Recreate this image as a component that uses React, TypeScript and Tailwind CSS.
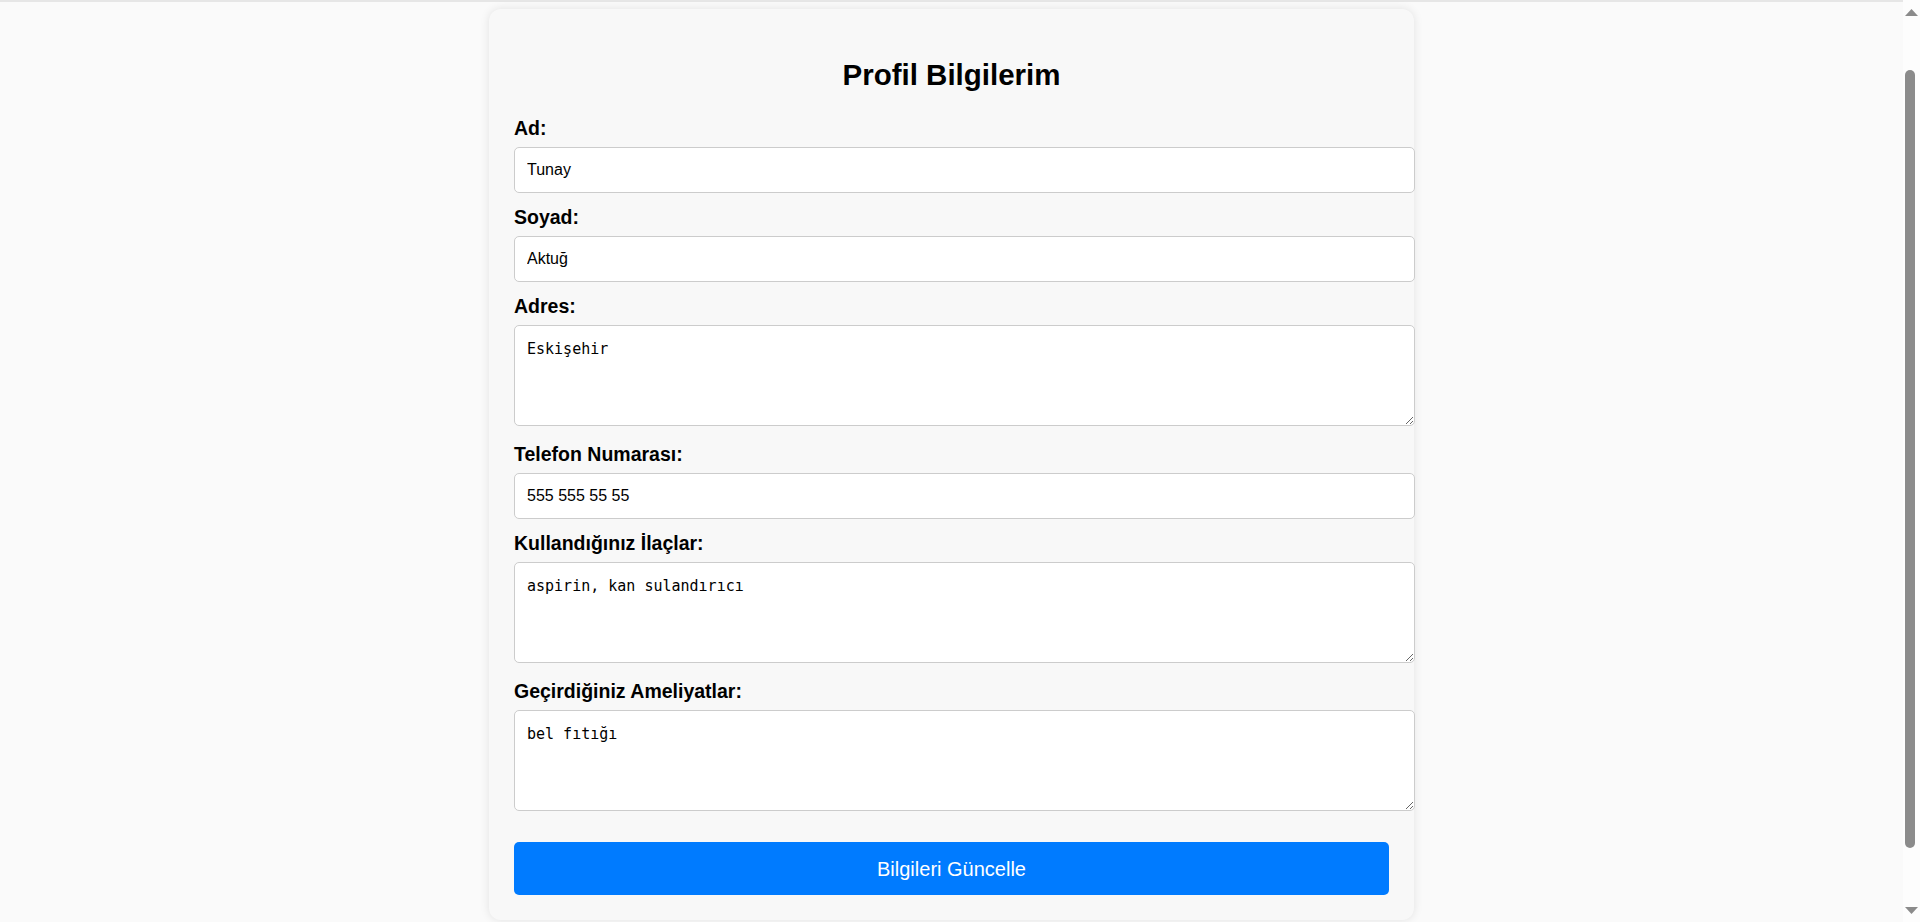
import React, { useLayoutEffect, useState } from 'react'

const inputClass =
  'block h-[46px] w-[901px] px-3 mb-[13px] bg-white border border-[#cccccc] rounded-[5px] text-[16px] text-black outline-none'
const areaClass =
  'block h-[101px] w-[901px] p-3 mb-[17px] bg-white border border-[#cccccc] rounded-[5px] text-[15px] text-black outline-none resize font-["DejaVu_Sans_Mono",monospace]'
const labelClass = 'block mb-2 text-[19.5px] leading-[22px] font-bold text-black'

// classic browser scrollbar, drawn since the headless window hides its own
const ScrollBar = () => (
  <div className='fixed top-0 right-0 h-screen w-[17px] bg-[#fdfdfd]'>
    <svg className='absolute top-[9px] left-[2px]' width='13' height='7' viewBox='0 0 13 7'>
      <polygon points='6.5,0 13,7 0,7' fill='#8b8b8b' />
    </svg>
    <div className='absolute top-[70px] left-[2px] w-[10px] h-[778px] rounded-full bg-[#8b8b8b]' />
    <svg className='absolute bottom-[8px] left-[2px]' width='13' height='7' viewBox='0 0 13 7'>
      <polygon points='0,0 13,0 6.5,7' fill='#8b8b8b' />
    </svg>
  </div>
)

const App = () => {
  const [form, setForm] = useState({
    ad: 'Tunay',
    soyad: 'Aktuğ',
    adres: 'Eskişehir',
    telefon: '555 555 55 55',
    ilaclar: 'aspirin, kan sulandırıcı',
    ameliyatlar: 'bel fıtığı',
  })

  // page was captured scrolled a little below the top bar
  useLayoutEffect(() => {
    window.scrollTo(0, 63)
  }, [])

  const set = (key: keyof typeof form) => (e: React.ChangeEvent<HTMLInputElement | HTMLTextAreaElement>) =>
    setForm({ ...form, [key]: e.target.value })

  return (
    <div className='min-h-screen pr-[17px] bg-[#fafafa] font-["Liberation_Sans",Arial,sans-serif]'>
      <header className='h-[65px] bg-white border-b-2 border-[#e6e6e6]' />

      <main className='flex justify-center pt-[7px] pb-[69px]'>
        <div className='w-[925px] p-[25px] bg-[#f8f8f8] rounded-xl shadow-[0_0_10px_rgba(0,0,0,0.1)]'>
          <h2 className='mt-[24px] mb-[25px] text-center text-[29.5px] leading-[34px] font-bold text-black'>
            Profil Bilgilerim
          </h2>

          <form onSubmit={(e) => e.preventDefault()}>
            <label className={labelClass}>Ad:</label>
            <input className={inputClass} value={form.ad} onChange={set('ad')} />

            <label className={labelClass}>Soyad:</label>
            <input className={inputClass} value={form.soyad} onChange={set('soyad')} />

            <label className={labelClass}>Adres:</label>
            <textarea className={areaClass} value={form.adres} onChange={set('adres')} />

            <label className={labelClass}>Telefon Numarası:</label>
            <input className={inputClass} value={form.telefon} onChange={set('telefon')} />

            <label className={labelClass}>Kullandığınız İlaçlar:</label>
            <textarea className={areaClass} value={form.ilaclar} onChange={set('ilaclar')} />

            <label className={labelClass}>Geçirdiğiniz Ameliyatlar:</label>
            <textarea className={areaClass} value={form.ameliyatlar} onChange={set('ameliyatlar')} />

            <button
              type='submit'
              className='mt-[14px] w-full h-[53px] bg-[#007bff] text-white text-[20px] rounded-[5px] cursor-pointer'
            >
              Bilgileri Güncelle
            </button>
          </form>
        </div>
      </main>

      <ScrollBar />
    </div>
  )
}

export default App
